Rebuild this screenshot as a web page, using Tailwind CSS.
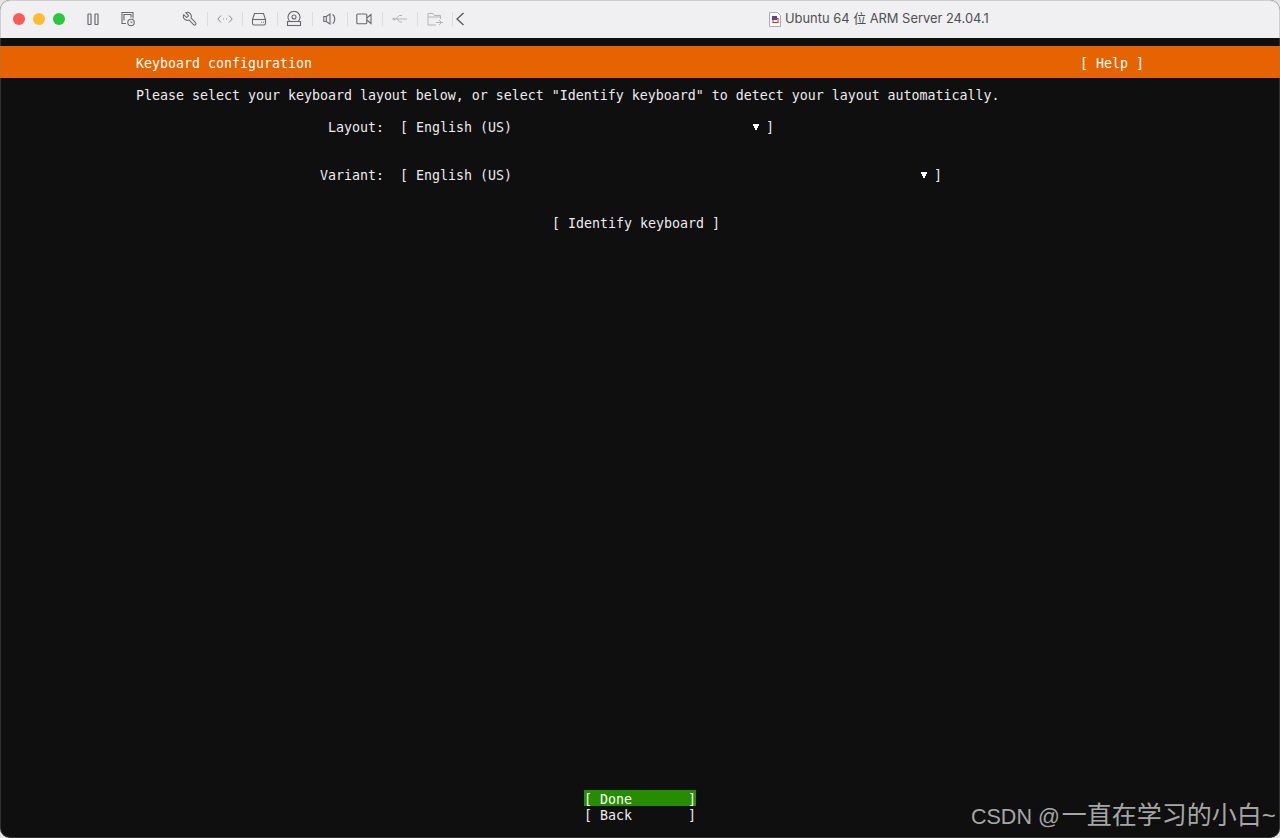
<!DOCTYPE html>
<html lang="en">
<head>
  <meta charset="UTF-8" />
  <title>Ubuntu 64 位 ARM Server 24.04.1</title>
  <script src="https://cdn.jsdelivr.net/npm/@tailwindcss/browser@4"></script>
</head>
<body class="bg-[#e4e4e4]">
  <div class="relative h-[838px] w-[1280px] overflow-hidden rounded-[10px] bg-[#0f0f0f]">

    <!-- title bar -->
    <div class="flex h-[38px] items-center bg-[#f0f0f3] pl-[13px] text-[#6a6a6e]">
      <div class="flex gap-2">
        <div class="size-3 rounded-full bg-[#fc5c57]"></div>
        <div class="size-3 rounded-full bg-[#fdbb2e]"></div>
        <div class="size-3 rounded-full bg-[#2ac840]"></div>
      </div>
      <svg class="ml-[21px]" width="14" height="14" viewBox="0 0 14 14" fill="none" stroke="currentColor" stroke-width="1.2"><rect x="2" y="2" width="3" height="10.500" rx=".5"/><rect x="9" y="2" width="3" height="10.500" rx=".5"/></svg>
      <svg class="ml-5" width="16" height="16" viewBox="0 0 16 16" fill="none" stroke="currentColor" stroke-width="1.100"><path d="M6 12.500H2V1.500h11v6"/><path d="M4 9.500V3.500h7v3"/><circle cx="11" cy="11.500" r="3.200"/><path d="M11 10v1.600h1.400" stroke-width=".8"/></svg>

      <div class="ml-[37px] flex">
        <div class="flex h-[14px] w-[35px] items-center justify-center border-r border-[#dcdcdf]">
          <svg width="16" height="16" viewBox="0 0 24 24" fill="none" stroke="currentColor" stroke-width="1.600" stroke-linejoin="round"><path transform="translate(24 0) scale(-1 1)" d="M14.700 6.300a1 1 0 0 0 0 1.400l1.600 1.600a1 1 0 0 0 1.400 0l3.770-3.770a6 6 0 0 1-7.940 7.940l-6.910 6.910a2.120 2.120 0 0 1-3-3l6.910-6.910a6 6 0 0 1 7.940-7.940l-3.760 3.760z"/></svg>
        </div>
        <div class="flex h-[14px] w-[35px] items-center justify-center border-r border-[#dcdcdf]">
          <svg width="16" height="10" viewBox="0 0 16 10" fill="none" stroke="#85858a" stroke-width="1"><path d="M4 1.500.8 5 4 8.500M12 1.500 15.200 5 12 8.500"/><path d="M6 5h.9M9 5h.9"/></svg>
        </div>
        <div class="flex h-[14px] w-[35px] items-center justify-center border-r border-[#dcdcdf]">
          <svg class="-ml-0.5" width="16" height="14" viewBox="0 0 16 14" fill="none" stroke="currentColor" stroke-width="1.100"><path d="M1.500 7.500 3.500 1.500h9l2 6v4a1.500 1.500 0 0 1-1.500 1.500H3A1.500 1.500 0 0 1 1.500 11.500z"/><path d="M1.500 7.500h13"/><path d="M10 10.300h.9M12 10.300h.9"/></svg>
        </div>
        <div class="flex h-[14px] w-[35px] items-center justify-center border-r border-[#dcdcdf]">
          <svg class="-ml-0.5" width="16" height="16" viewBox="0 0 16 16" fill="none" stroke="currentColor" stroke-width="1.100"><path d="M3.500 10a6 5.800 0 1 1 9 0"/><circle cx="8" cy="6" r="2"/><rect x="1.500" y="10.500" width="13" height="4"/></svg>
        </div>
        <div class="flex h-[14px] w-[35px] items-center justify-center border-r border-[#dcdcdf]">
          <svg width="14" height="14" viewBox="0 0 14 14" fill="none" stroke="currentColor" stroke-width="1.100"><path d="M.8 4.500h2.500L7 2v10L3.300 9.500H.8z"/><path d="M3.300 4.500v5"/><path d="M9.500 2.500c3 1.500 3 7.500 0 9"/></svg>
        </div>
        <div class="flex h-[14px] w-[35px] items-center justify-center border-r border-[#dcdcdf]">
          <svg class="-ml-0.5" width="16" height="12" viewBox="0 0 16 12" fill="none" stroke="currentColor" stroke-width="1.100"><rect x=".8" y="1" width="10" height="9.800" rx="1"/><path d="M10.800 5 15 1.500v9L10.800 7"/></svg>
        </div>
        <div class="flex h-[14px] w-[35px] items-center justify-center border-r border-[#dcdcdf]">
          <svg width="16" height="12" viewBox="0 0 16 12" fill="none" stroke="#b4b4b8" stroke-width="1"><path d="M.5 6H15M4 6l3-3.500h3M5 6l2.500 3H10"/><circle cx="2" cy="6" r="1"/></svg>
        </div>
        <div class="flex h-[14px] w-[35px] items-center justify-center border-r border-[#dcdcdf]">
          <svg width="17" height="15" viewBox="0 0 17 15" fill="none" stroke="#b4b4b8" stroke-width="1"><path d="M9 13H1V1.500h5l1.500 2h6V7"/><path d="M1 5h12M9 10.500h7M12 8l2.500 2.500L12 13"/></svg>
        </div>
      </div>
      <svg class="ml-[2px]" width="10" height="14" viewBox="0 0 10 14" fill="none" stroke="#55555a" stroke-width="1.300"><path d="M8.500 1 2 7l6.500 6"/></svg>

      <svg class="ml-[304px]" width="12" height="15" viewBox="0 0 12 15" fill="none"><path d="M.5.500h8l3 3v11H.5z" fill="#fafafa" stroke="#9a9a9e" stroke-width=".8"/><rect x="3" y="4" width="5" height="4" fill="#3b4fb0"/><rect x="4" y="6.500" width="5" height="4" stroke="#e0252b"/></svg>
      <span class="ml-[4px] font-['Inter','Noto_Sans_CJK_SC',sans-serif] text-[12.900px] whitespace-nowrap text-[#4f4f52]">Ubuntu 64 位 ARM Server 24.04.1</span>
    </div>

    <!-- console -->
    <div class="font-['DejaVu_Sans_Mono',monospace] text-[13.290px] leading-4 text-[#ececec]">
      <div class="mt-2 flex h-8 items-center justify-between bg-[#e56300] px-[136px] pt-[3px] text-white">
        <span>Keyboard configuration</span><span>[ Help ]</span>
      </div>

      <div class="mt-[10px] pl-[136px] whitespace-pre">Please select your keyboard layout below, or select "Identify keyboard" to detect your layout automatically.</div>

      <div class="mt-4 flex pl-[136px]">
        <span class="ml-[192px] w-[72px]">Layout:</span><span class="w-[352px] whitespace-pre">[ English (US)</span><svg class="mt-[4px] mr-[7px] ml-px" width="6" height="6" viewBox="0 0 6 6" fill="#fff"><path d="M0 0h6v2H5v2H4v2H2V4H1V2H0z"/></svg><span>]</span>
      </div>
      <div class="mt-8 flex pl-[136px]">
        <span class="ml-[184px] w-[80px]">Variant:</span><span class="w-[520px] whitespace-pre">[ English (US)</span><svg class="mt-[4px] mr-[7px] ml-px" width="6" height="6" viewBox="0 0 6 6" fill="#fff"><path d="M0 0h6v2H5v2H4v2H2V4H1V2H0z"/></svg><span>]</span>
      </div>
      <div class="mt-8 pl-[552px] whitespace-pre">[ Identify keyboard ]</div>

      <div class="mt-[558px] ml-[584px] w-[112px]">
        <div class="h-4 bg-[#268c00] pt-[2px] whitespace-pre text-white">[ Done       ]</div>
        <div class="h-4 pt-[2px] whitespace-pre">[ Back       ]</div>
      </div>
    </div>

    <div class="absolute top-[797px] left-[971px] font-['Liberation_Sans','Noto_Sans_CJK_SC',sans-serif] text-[21.500px] leading-9 whitespace-nowrap text-[#a6a6a6]">CSDN @<span class="ml-[2px] text-[25px]">一直在学习的小白</span><span class="text-[24px]">~</span></div>
    <div class="pointer-events-none absolute inset-0 rounded-[10px] border border-[#808080]/30"></div>
  </div>
</body>
</html>
